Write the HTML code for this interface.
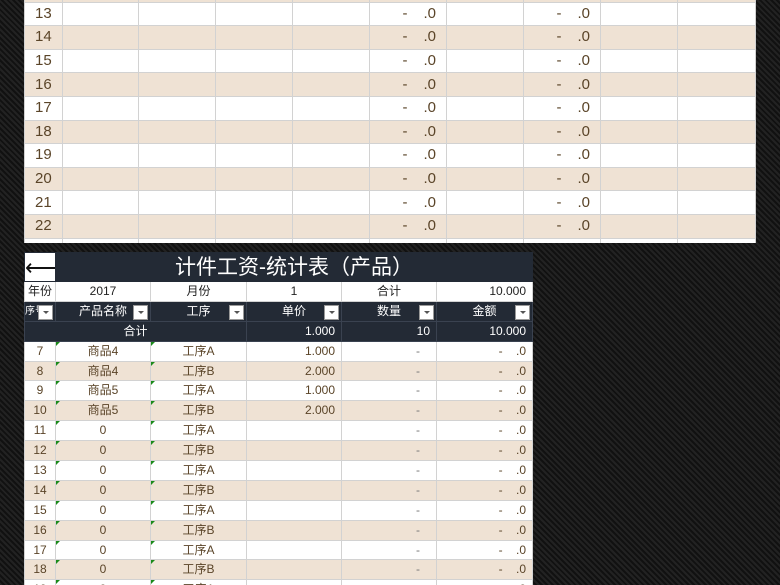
<!DOCTYPE html>
<html><head><meta charset="utf-8"><style>
*{margin:0;padding:0;box-sizing:border-box}
body{width:780px;height:585px;overflow:hidden;position:relative;background:#161616;
background-image:repeating-linear-gradient(45deg,#222 0 2px,#111 2px 4px);
font-family:"Liberation Sans","Noto Sans CJK SC",sans-serif;color:#5a4428}
.wrap{position:absolute;overflow:hidden}
table{border-collapse:collapse;table-layout:fixed;position:absolute;left:0}
td{border:1px solid #d2d2d2;overflow:hidden;white-space:nowrap;padding:0}
#t1{top:-22px;width:731px;font-family:"Liberation Sans Narrow","Liberation Sans",sans-serif;font-size:15px}
#t1 td{height:23.6px;line-height:20px}
#t1 td.n{padding-left:10px}
#t1 td.d{text-align:right;padding-right:10px}
#t1 td.d span{margin-right:16px}
.w{background:#fff}.b{background:#efe2d4}
#t2{top:0;width:508px;font-size:12px}
#t2 td{height:19.9px;line-height:17px;text-align:center;vertical-align:middle}
.dk td{background:#232a35;color:#fff;border-color:#3a4250}
.r{text-align:right!important;padding-right:6px!important}
.g{position:relative}
.g:before{content:"";position:absolute;left:0;top:0;border-top:4px solid #1a8a1a;border-right:4px solid transparent}
.f{position:relative}
.f:after{content:"";position:absolute;right:2px;top:3px;width:13px;height:13px;background:#fff;border:1px solid #999}
.f i{position:absolute;right:6px;top:9px;border-top:3px solid #555;border-left:3px solid transparent;border-right:3px solid transparent;z-index:2}
.dv{color:#777;padding-right:16px!important}
</style></head><body>
<div class="wrap" style="left:24px;top:0;width:732px;height:243px">
<table id="t1">
<colgroup><col style="width:38px"><col style="width:76px"><col style="width:77px"><col style="width:77px"><col style="width:77px"><col style="width:77px"><col style="width:77px"><col style="width:77px"><col style="width:77px"><col style="width:78px"></colgroup>
<tr class="b"><td class="n">12</td><td></td><td></td><td></td><td></td><td class="d"><span>-</span>.0</td><td></td><td class="d"><span>-</span>.0</td><td></td><td></td></tr>
<tr class="w"><td class="n">13</td><td></td><td></td><td></td><td></td><td class="d"><span>-</span>.0</td><td></td><td class="d"><span>-</span>.0</td><td></td><td></td></tr>
<tr class="b"><td class="n">14</td><td></td><td></td><td></td><td></td><td class="d"><span>-</span>.0</td><td></td><td class="d"><span>-</span>.0</td><td></td><td></td></tr>
<tr class="w"><td class="n">15</td><td></td><td></td><td></td><td></td><td class="d"><span>-</span>.0</td><td></td><td class="d"><span>-</span>.0</td><td></td><td></td></tr>
<tr class="b"><td class="n">16</td><td></td><td></td><td></td><td></td><td class="d"><span>-</span>.0</td><td></td><td class="d"><span>-</span>.0</td><td></td><td></td></tr>
<tr class="w"><td class="n">17</td><td></td><td></td><td></td><td></td><td class="d"><span>-</span>.0</td><td></td><td class="d"><span>-</span>.0</td><td></td><td></td></tr>
<tr class="b"><td class="n">18</td><td></td><td></td><td></td><td></td><td class="d"><span>-</span>.0</td><td></td><td class="d"><span>-</span>.0</td><td></td><td></td></tr>
<tr class="w"><td class="n">19</td><td></td><td></td><td></td><td></td><td class="d"><span>-</span>.0</td><td></td><td class="d"><span>-</span>.0</td><td></td><td></td></tr>
<tr class="b"><td class="n">20</td><td></td><td></td><td></td><td></td><td class="d"><span>-</span>.0</td><td></td><td class="d"><span>-</span>.0</td><td></td><td></td></tr>
<tr class="w"><td class="n">21</td><td></td><td></td><td></td><td></td><td class="d"><span>-</span>.0</td><td></td><td class="d"><span>-</span>.0</td><td></td><td></td></tr>
<tr class="b"><td class="n">22</td><td></td><td></td><td></td><td></td><td class="d"><span>-</span>.0</td><td></td><td class="d"><span>-</span>.0</td><td></td><td></td></tr>
<tr class="w"><td class="n">23</td><td></td><td></td><td></td><td></td><td class="d"><span>-</span>.0</td><td></td><td class="d"><span>-</span>.0</td><td></td><td></td></tr>
</table>
</div>
<div class="wrap" style="left:24px;top:252px;width:509px;height:333px">
<table id="t2">
<colgroup><col style="width:31px"><col style="width:95px"><col style="width:96px"><col style="width:95px"><col style="width:95px"><col style="width:96px"></colgroup>
<tr><td style="height:29px;line-height:27px;background:#fff;color:#111;font-size:22px;border-color:#232a35">⟵</td><td colspan="5" style="height:29px;line-height:27px;background:#232a35;color:#fff;font-size:21px;border-color:#232a35">计件工资-统计表（产品）</td></tr>
<tr class="w" style="color:#222"><td>年份</td><td>2017</td><td>月份</td><td>1</td><td>合计</td><td class="r">10.000</td></tr>
<tr class="dk"><td class="f" style="font-size:10px;text-align:left">序号<i></i></td><td class="f">产品名称<i></i></td><td class="f">工序<i></i></td><td class="f">单价<i></i></td><td class="f">数量<i></i></td><td class="f">金额<i></i></td></tr>
<tr class="dk"><td colspan="3">合计</td><td class="r">1.000</td><td class="r">10</td><td class="r">10.000</td></tr>
<tr class="w"><td>7</td><td class="g">商品4</td><td class="g">工序A</td><td class="r">1.000</td><td class="r dv">-</td><td class="r">-&nbsp;&nbsp;&nbsp;&nbsp;.0</td></tr>
<tr class="b"><td>8</td><td class="g">商品4</td><td class="g">工序B</td><td class="r">2.000</td><td class="r dv">-</td><td class="r">-&nbsp;&nbsp;&nbsp;&nbsp;.0</td></tr>
<tr class="w"><td>9</td><td class="g">商品5</td><td class="g">工序A</td><td class="r">1.000</td><td class="r dv">-</td><td class="r">-&nbsp;&nbsp;&nbsp;&nbsp;.0</td></tr>
<tr class="b"><td>10</td><td class="g">商品5</td><td class="g">工序B</td><td class="r">2.000</td><td class="r dv">-</td><td class="r">-&nbsp;&nbsp;&nbsp;&nbsp;.0</td></tr>
<tr class="w"><td>11</td><td class="g">0</td><td class="g">工序A</td><td></td><td class="r dv">-</td><td class="r">-&nbsp;&nbsp;&nbsp;&nbsp;.0</td></tr>
<tr class="b"><td>12</td><td class="g">0</td><td class="g">工序B</td><td></td><td class="r dv">-</td><td class="r">-&nbsp;&nbsp;&nbsp;&nbsp;.0</td></tr>
<tr class="w"><td>13</td><td class="g">0</td><td class="g">工序A</td><td></td><td class="r dv">-</td><td class="r">-&nbsp;&nbsp;&nbsp;&nbsp;.0</td></tr>
<tr class="b"><td>14</td><td class="g">0</td><td class="g">工序B</td><td></td><td class="r dv">-</td><td class="r">-&nbsp;&nbsp;&nbsp;&nbsp;.0</td></tr>
<tr class="w"><td>15</td><td class="g">0</td><td class="g">工序A</td><td></td><td class="r dv">-</td><td class="r">-&nbsp;&nbsp;&nbsp;&nbsp;.0</td></tr>
<tr class="b"><td>16</td><td class="g">0</td><td class="g">工序B</td><td></td><td class="r dv">-</td><td class="r">-&nbsp;&nbsp;&nbsp;&nbsp;.0</td></tr>
<tr class="w"><td>17</td><td class="g">0</td><td class="g">工序A</td><td></td><td class="r dv">-</td><td class="r">-&nbsp;&nbsp;&nbsp;&nbsp;.0</td></tr>
<tr class="b"><td>18</td><td class="g">0</td><td class="g">工序B</td><td></td><td class="r dv">-</td><td class="r">-&nbsp;&nbsp;&nbsp;&nbsp;.0</td></tr>
<tr class="w"><td>19</td><td class="g">0</td><td class="g">工序A</td><td></td><td class="r dv">-</td><td class="r">-&nbsp;&nbsp;&nbsp;&nbsp;.0</td></tr>
</table>
</div>
</body></html>
